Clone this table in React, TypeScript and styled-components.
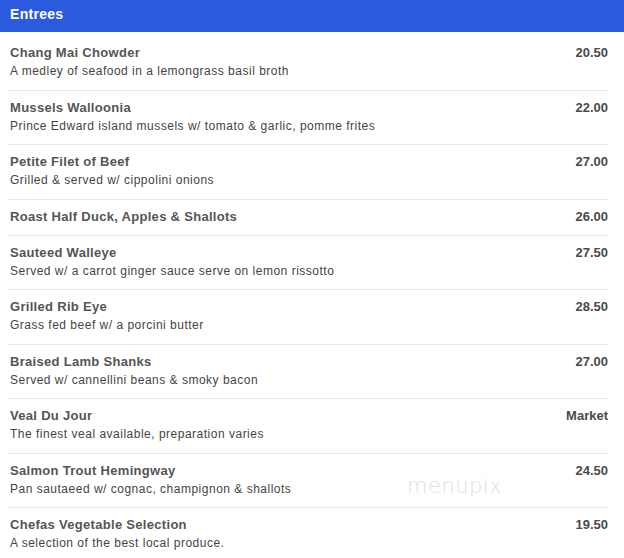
import * as React from 'react'
import styled, { createGlobalStyle } from 'styled-components'

type Entree = {
    name: string
    description?: string
    price: string
}

const entrees: Entree[] = [
    { name: 'Chang Mai Chowder', description: 'A medley of seafood in a lemongrass basil broth', price: '20.50' },
    { name: 'Mussels Walloonia', description: 'Prince Edward island mussels w/ tomato & garlic, pomme frites', price: '22.00' },
    { name: 'Petite Filet of Beef', description: 'Grilled & served w/ cippolini onions', price: '27.00' },
    { name: 'Roast Half Duck, Apples & Shallots', price: '26.00' },
    { name: 'Sauteed Walleye', description: 'Served w/ a carrot ginger sauce serve on lemon rissotto', price: '27.50' },
    { name: 'Grilled Rib Eye', description: 'Grass fed beef w/ a porcini butter', price: '28.50' },
    { name: 'Braised Lamb Shanks', description: 'Served w/ cannellini beans & smoky bacon', price: '27.00' },
    { name: 'Veal Du Jour', description: 'The finest veal available, preparation varies', price: 'Market' },
    { name: 'Salmon Trout Hemingway', description: 'Pan sautaeed w/ cognac, champignon & shallots', price: '24.50' },
    { name: 'Chefas Vegetable Selection', description: 'A selection of the best local produce.', price: '19.50' },
]

const GlobalStyle = createGlobalStyle`
    body {
        margin: 0;
        background: #ffffff;
        font-family: "Liberation Sans", Arial, sans-serif;
    }
`

const Page = styled.div`
    position: relative;
    width: 624px;
`

const Header = styled.div`
    height: 32px;
    background: #2c5ade;
    color: #ffffff;
    font-size: 14px;
    font-weight: bold;
    letter-spacing: 0.3px;
    line-height: 28px;
    padding-left: 10px;
`

const List = styled.ul`
    list-style: none;
    margin: 0;
    padding: 3px 16px 0 8px;
`

const Item = styled.li`
    display: flex;
    justify-content: space-between;
    padding: 8px 0 9px 2px;
    border-top: 1px solid #e8e8e8;

    &:first-child {
        border-top-color: transparent;
    }
`

const Info = styled.div`
    display: flex;
    flex-direction: column;
`

const Name = styled.span`
    font-size: 13px;
    font-weight: bold;
    letter-spacing: 0.3px;
    line-height: 18px;
    color: #555555;
`

const Description = styled.span`
    font-size: 12px;
    letter-spacing: 0.5px;
    line-height: 18.5px;
    color: #444444;
`

const Price = styled.span`
    font-size: 13px;
    font-weight: bold;
    line-height: 18px;
    color: #4a4a4a;
`

const Watermark = styled.div`
    position: absolute;
    left: 407px;
    top: 474px;
    font-family: "DejaVu Sans", sans-serif;
    font-size: 21px;
    font-weight: 200;
    letter-spacing: 0.5px;
    color: #e0e0e0;
    pointer-events: none;
`

const App: React.FunctionComponent = () => (
    <Page>
        <GlobalStyle />
        <Header>Entrees</Header>
        <List>
            {entrees.map(entree => (
                <Item key={entree.name}>
                    <Info>
                        <Name>{entree.name}</Name>
                        {entree.description && <Description>{entree.description}</Description>}
                    </Info>
                    <Price>{entree.price}</Price>
                </Item>
            ))}
        </List>
        <Watermark>menupix</Watermark>
    </Page>
)

export default App
